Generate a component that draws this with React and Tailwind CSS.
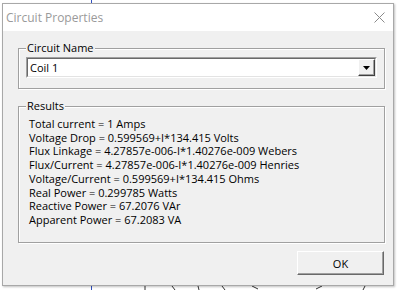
export default function App() {
  const results = [
    "Total current = 1 Amps",
    "Voltage Drop = 0.599569+I*134.415 Volts",
    "Flux Linkage = 4.27857e-006-I*1.40276e-009 Webers",
    "Flux/Current = 4.27857e-006-I*1.40276e-009 Henries",
    "Voltage/Current = 0.599569+I*134.415 Ohms",
    "Real Power = 0.299785 Watts",
    "Reactive Power = 67.2076 VAr",
    "Apparent Power = 67.2083 VA",
  ];

  return (
    <div
      className="relative w-[400px] h-[290px] overflow-hidden bg-white pt-[3px] pl-[2px]"
      style={{ fontFamily: '"Open Sans", "Liberation Sans", Arial, sans-serif' }}
    >
      {/* canvas bits peeking out behind the dialog */}
      <svg className="absolute left-0 top-0" width="400" height="290">
        <line x1="91.5" y1="0" x2="91.5" y2="3" stroke="#3050c0" />
        <line x1="91.5" y1="286" x2="91.5" y2="290" stroke="#3050c0" />
        <path d="M145 286 L145 290 M172 286 L175 290 M198 286 L199 290 M222 286 L225 290 M252 286 L258 289 M316 289 L322 286 M365 286 L363 290" stroke="#333" fill="none" />
      </svg>

      {/* dialog window */}
      <div className="relative w-[392px] h-[283px] border border-[#a8a8a8] bg-[#f0f0f0] shadow-[1px_1px_2px_rgba(0,0,0,0.25)] flex flex-col">
        {/* title bar */}
        <div className="h-[27px] bg-white flex items-center justify-between pl-[3px] pr-[8px]">
          <span className="text-[12px] text-[#9a9a9a]">Circuit Properties</span>
          <svg width="11" height="11" viewBox="0 0 11 11">
            <path d="M0.5 0.5 L10.5 10.5 M10.5 0.5 L0.5 10.5" stroke="#8a8a8a" strokeWidth="1" fill="none" />
          </svg>
        </div>

        <div className="flex-1 pl-[15px] pr-[9px] pt-[17px] text-[11px] text-black">
          {/* Circuit Name group */}
          <div className="relative w-[367px] h-[41px] border border-[#a0a0a0] shadow-[inset_1px_1px_0_#fff,1px_1px_0_#fff] pt-[8px] pl-[7px]">
            <span className="absolute left-[7px] -top-[9px] bg-[#f0f0f0] px-[1px] leading-[15px]">
              Circuit Name
            </span>
            <div className="w-[351px] h-[21px] flex border-t border-l border-[#a0a0a0] border-b border-r border-b-white border-r-white">
              <div className="flex-1 flex border-t border-l border-[#696969] border-b border-r border-b-[#e3e3e3] border-r-[#e3e3e3] bg-white">
                <span className="flex-1 pl-[2px] leading-[17px]">Coil 1</span>
                <div className="w-[17px] h-[17px] bg-[#f0f0f0] flex items-center justify-center border-t border-l border-white border-b border-r border-b-[#404040] border-r-[#404040] shadow-[inset_-1px_-1px_0_#a0a0a0]">
                  <svg width="7" height="4" viewBox="0 0 7 4">
                    <path d="M0 0 H7 L3.5 4 Z" fill="#000" />
                  </svg>
                </div>
              </div>
            </div>
          </div>

          {/* Results group */}
          <div className="relative mt-[17px] w-[367px] h-[137px] border border-[#a0a0a0] shadow-[inset_1px_1px_0_#fff,1px_1px_0_#fff] pt-[10px] pl-[10px]">
            <span className="absolute left-[7px] -top-[9px] bg-[#f0f0f0] px-[1px] leading-[15px]">
              Results
            </span>
            <div className="flex flex-col">
              {results.map((r) => (
                <span key={r} className="leading-[13.7px] whitespace-nowrap">
                  {r}
                </span>
              ))}
            </div>
          </div>

          {/* buttons */}
          <div className="flex justify-end mt-[8px]">
            <button className="w-[87px] h-[24px] bg-[#f0f0f0] border-t border-l border-white border-b border-r border-b-[#696969] border-r-[#696969] shadow-[inset_-1px_-1px_0_#a0a0a0] text-[11px] leading-none">
              OK
            </button>
          </div>
        </div>
      </div>
    </div>
  );
}
